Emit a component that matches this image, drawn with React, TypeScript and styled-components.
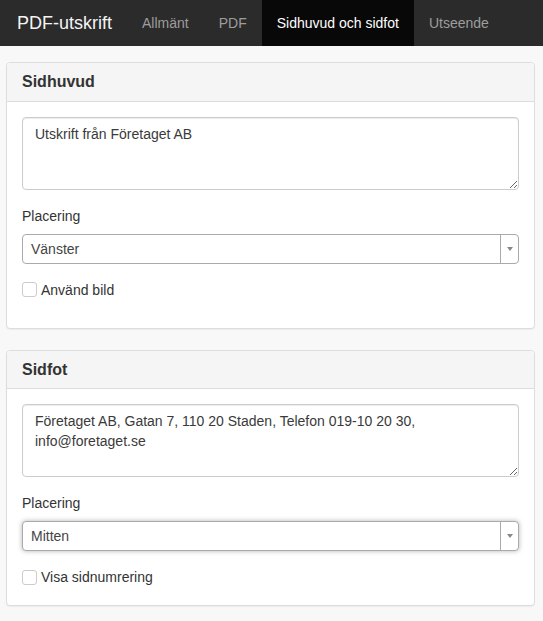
import React from 'react'
import styled, { createGlobalStyle } from 'styled-components'

const GlobalStyle = createGlobalStyle`
  * {
    box-sizing: border-box;
  }

  body {
    margin: 0;
    background: #f8f8f8;
    font-family: 'Liberation Sans', Arial, Helvetica, sans-serif;
    font-size: 14px;
    line-height: 20px;
    color: #333;
  }
`

const Navbar = styled.nav`
  display: flex;
  align-items: stretch;
  height: 46px;
  background: #2b2b2b;
`

const Brand = styled.a`
  padding: 0 15px 0 17px;
  font-size: 18px;
  line-height: 46px;
  color: #f4f4f4;
  text-decoration: none;
`

const NavLink = styled.a<{ $active?: boolean }>`
  padding: 0 15px;
  font-size: 14px;
  line-height: 46px;
  text-decoration: none;
  color: ${(props) => (props.$active ? '#fff' : '#9d9d9d')};
  background: ${(props) => (props.$active ? '#080808' : 'transparent')};
`

const Main = styled.main`
  padding: 16px 8px 0 6px;
`

const Panel = styled.section`
  margin-bottom: 21px;
  background: #fff;
  border: 1px solid #ddd;
  border-radius: 4px;
  box-shadow: 0 1px 1px rgba(0, 0, 0, 0.05);
`

const PanelHeading = styled.div`
  padding: 10px 15px;
  background: #f5f5f5;
  border-bottom: 1px solid #ddd;
  border-radius: 3px 3px 0 0;
`

const PanelTitle = styled.h3`
  margin: 0;
  font-size: 16px;
  font-weight: 700;
  line-height: 1.1;
  color: #333;
`

const PanelBody = styled.div`
  padding: 15px;
`

const FormGroup = styled.div`
  margin-bottom: 16px;
`

const TextArea = styled.textarea`
  display: block;
  width: 100%;
  height: 73px;
  margin: 0;
  padding: 6px 12px;
  font-family: inherit;
  font-size: 14px;
  line-height: 20px;
  color: #3a3a3a;
  background: #fff;
  border: 1px solid #ccc;
  border-radius: 4px;
  box-shadow: inset 0 1px 1px rgba(0, 0, 0, 0.075);
  resize: vertical;
  outline: none;
`

const Label = styled.label`
  display: block;
  margin-bottom: 8px;
  color: #333;
`

const Select = styled.div<{ $focused?: boolean }>`
  display: flex;
  height: 30px;
  background: #fff;
  border: 1px solid #aaa;
  border-radius: 4px;
  box-shadow: ${(props) => (props.$focused ? '0 0 5px rgba(0, 0, 0, 0.3)' : 'none')};
`

const SelectValue = styled.span`
  flex: 1;
  padding: 0 8px;
  line-height: 28px;
  color: #444;
`

const SelectArrow = styled.span`
  display: flex;
  align-items: center;
  justify-content: center;
  width: 18px;
  border-left: 1px solid #aaa;

  &::after {
    content: '';
    border-left: 3px solid transparent;
    border-right: 3px solid transparent;
    border-top: 4px solid #888;
  }
`

const CheckRow = styled.label<{ $spaceAfter: number }>`
  display: flex;
  align-items: center;
  gap: 4px;
  margin-bottom: ${(props) => props.$spaceAfter}px;
  color: #333;
`

const CheckBox = styled.input`
  appearance: none;
  width: 15px;
  height: 15px;
  margin: 0;
  background: #fff;
  border: 1px solid #ccc;
  border-radius: 3px;
`

interface SectionProps {
  title: string
  text: string
  placement: string
  checkLabel: string
  focused?: boolean
  spaceAfter: number
}

function SettingsPanel({ title, text, placement, checkLabel, focused, spaceAfter }: SectionProps) {
  return (
    <Panel>
      <PanelHeading>
        <PanelTitle>{title}</PanelTitle>
      </PanelHeading>
      <PanelBody>
        <FormGroup>
          <TextArea defaultValue={text} />
        </FormGroup>
        <FormGroup>
          <Label>Placering</Label>
          <Select $focused={focused}>
            <SelectValue>{placement}</SelectValue>
            <SelectArrow />
          </Select>
        </FormGroup>
        <CheckRow $spaceAfter={spaceAfter}>
          <CheckBox type="checkbox" />
          {checkLabel}
        </CheckRow>
      </PanelBody>
    </Panel>
  )
}

export default function App() {
  return (
    <>
      <GlobalStyle />
      <Navbar>
        <Brand href="#">PDF-utskrift</Brand>
        <NavLink href="#">Allmänt</NavLink>
        <NavLink href="#">PDF</NavLink>
        <NavLink href="#" $active>
          Sidhuvud och sidfot
        </NavLink>
        <NavLink href="#">Utseende</NavLink>
      </Navbar>
      <Main>
        <SettingsPanel
          title="Sidhuvud"
          text="Utskrift från Företaget AB"
          placement="Vänster"
          checkLabel="Använd bild"
          spaceAfter={13}
        />
        <SettingsPanel
          title="Sidfot"
          text="Företaget AB, Gatan 7, 110 20 Staden, Telefon 019-10 20 30, info@foretaget.se"
          placement="Mitten"
          checkLabel="Visa sidnumrering"
          focused
          spaceAfter={3}
        />
      </Main>
    </>
  )
}
